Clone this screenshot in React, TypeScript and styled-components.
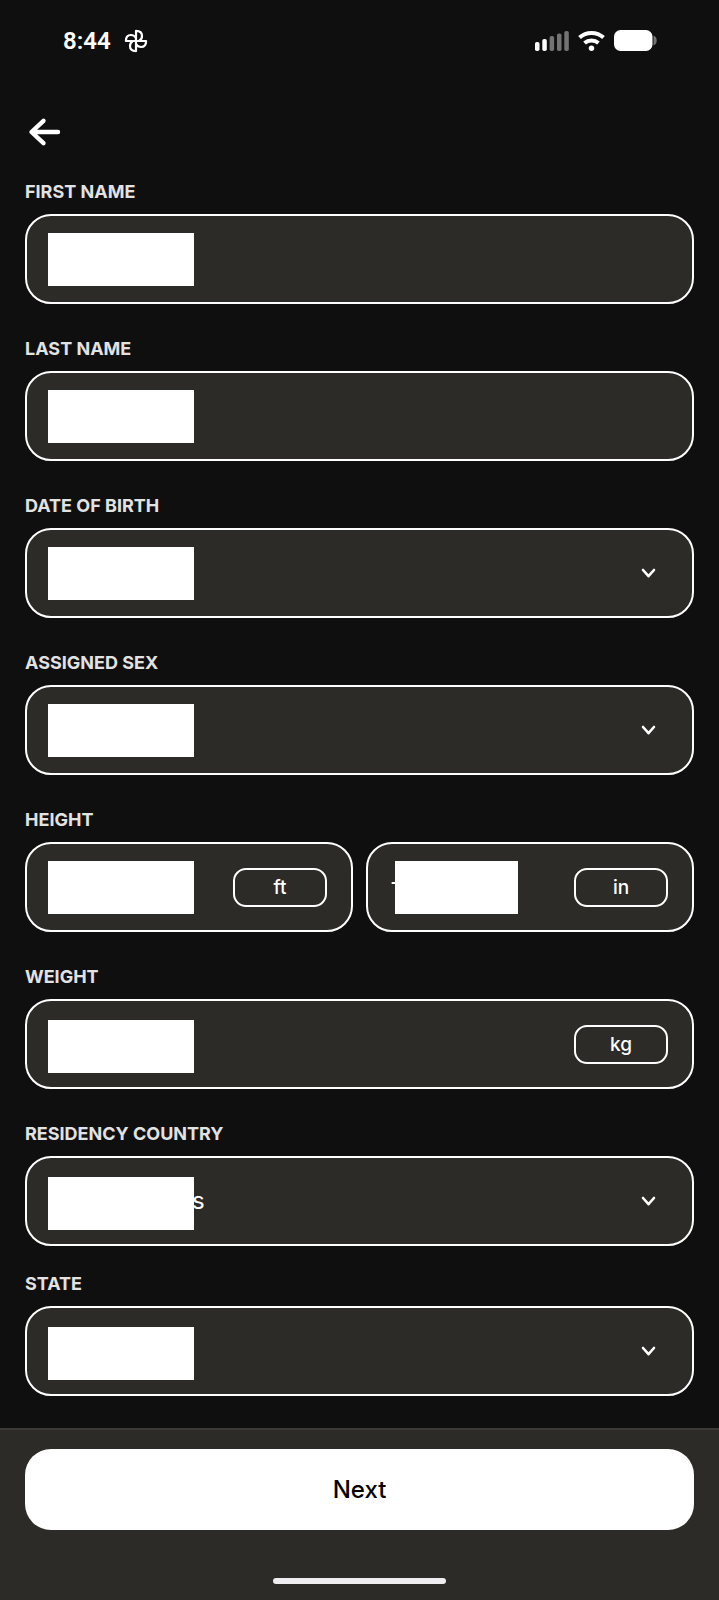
import React from "react";
import styled, { createGlobalStyle } from "styled-components";

const GlobalStyle = createGlobalStyle`
  *, *::before, *::after { box-sizing: border-box; }
  body {
    margin: 0;
    background: #0f0f0f;
    color: #fff;
    font-family: Inter, "Liberation Sans", sans-serif;
  }
`;

const Page = styled.div`
  min-height: 100vh;
  display: flex;
  flex-direction: column;
`;

const StatusBar = styled.div`
  height: 81px;
  padding: 0 62px 0 63px;
  display: flex;
  align-items: center;
  justify-content: space-between;
`;

const StatusGroup = styled.div<{ $gap: number }>`
  display: flex;
  align-items: center;
  gap: ${(p) => p.$gap}px;
`;

const Clock = styled.time`
  font: 600 24px/32px Roboto, sans-serif;
`;

const Header = styled.header`
  padding: 31px 25px 28px;
`;

const BackButton = styled.button`
  display: flex;
  align-items: center;
  width: 40px;
  height: 40px;
  padding: 0 0 0 3px;
  border: 0;
  background: none;
  color: #fff;
`;

const Form = styled.form`
  flex: 1;
  display: flex;
  flex-direction: column;
  gap: 33px;
  padding: 0 25px 32px;
`;

const FieldPair = styled.div`
  display: flex;
  flex-direction: column;
  gap: 26px;
`;

const Field = styled.div`
  display: flex;
  flex-direction: column;
  gap: 10px;
`;

const Label = styled.label`
  font-size: 18px;
  font-weight: 700;
  line-height: 24px;
  color: #e2e2e2;
`;

const BoxRow = styled.div`
  display: grid;
  grid-auto-flow: column;
  grid-auto-columns: minmax(0, 1fr);
  gap: 13px;
`;

const Box = styled.div`
  display: grid;
  align-items: center;
  height: 90px;
  border: 2px solid #fff;
  border-radius: 26px;
  background: #2d2b28;
  overflow: hidden;

  > * { grid-area: 1 / 1; }
`;

const controlStyle = `
  width: 100%;
  height: 100%;
  border: 0;
  outline: 0;
  background: none;
  color: #fff;
  font: 400 24px/32px Inter, "Liberation Sans", sans-serif;
`;

const TextInput = styled.input`
  ${controlStyle}
  padding: 0 120px 12px 22px;
`;

const Select = styled.select`
  ${controlStyle}
  appearance: none;
  padding: 0 60px 0 165px;
`;

const Mask = styled.span<{ $width?: number; $inset?: number; $low?: boolean }>`
  width: ${(p) => p.$width ?? 146}px;
  height: 53px;
  margin-left: ${(p) => p.$inset ?? 21}px;
  margin-top: ${(p) => (p.$low ? 4 : 0)}px;
  background: #fff;
  pointer-events: none;
`;

const UnitButton = styled.button`
  justify-self: end;
  width: 94px;
  height: 39px;
  margin-right: 24px;
  padding: 2px 0 0;
  border: 2px solid #fff;
  border-radius: 13px;
  background: none;
  color: #fff;
  font: 500 19px/24px Inter, "Liberation Sans", sans-serif;
`;

const Chevron = styled.svg`
  justify-self: end;
  margin-right: 36px;
  pointer-events: none;
`;

const Footer = styled.footer`
  display: flex;
  flex-direction: column;
  align-items: center;
  gap: 48px;
  padding: 19px 25px 16px;
  border-top: 2px solid #3d3937;
  background: #2d2b28;
`;

const NextButton = styled.button`
  width: 100%;
  height: 81px;
  border: 0;
  border-radius: 26px;
  background: #fff;
  color: #000;
  font: 500 24px/32px Inter, "Liberation Sans", sans-serif;
`;

const HomeIndicator = styled.div`
  width: 173px;
  height: 6px;
  border-radius: 3px;
  background: #efedef;
`;

const PinwheelIcon = () => (
  <svg width="24" height="24" viewBox="0 0 24 24" fill="none" stroke="#fff" strokeWidth="2.200" strokeLinejoin="round" aria-hidden="true">
    {[0, 90, 180, 270].map((angle) => (
      <path key={angle} transform={`rotate(${angle} 12 12)`} d="M12 12V1.900c3.800 0 6 2 6 5 0 2.200-1 4-3 5.100" />
    ))}
  </svg>
);

const SignalIcon = () => (
  <svg width="35" height="22" viewBox="0 0 35 22" aria-hidden="true">
    <rect x="0" y="12" width="4.500" height="9" rx="1.800" fill="#fff" />
    <rect x="7.300" y="9" width="4.500" height="12" rx="1.800" fill="#fff" />
    <rect x="14.600" y="6" width="4.500" height="15" rx="1.800" fill="#737373" />
    <rect x="22" y="3.500" width="4.500" height="17.500" rx="1.800" fill="#737373" />
    <rect x="29.300" y="1" width="4.500" height="20" rx="1.800" fill="#737373" />
  </svg>
);

const WifiIcon = () => (
  <svg width="28" height="22" viewBox="0 0 28 22" fill="none" stroke="#fff" strokeWidth="4" aria-hidden="true">
    <path d="M1.500 7.600C8.300 1.400 18.700 1.400 25.500 7.600" />
    <path d="M6.500 13C10.500 9.600 16.500 9.600 20.500 13" />
    <circle cx="13.500" cy="18.300" r="2.700" fill="#fff" stroke="none" />
  </svg>
);

const BatteryIcon = () => (
  <svg width="43" height="22" viewBox="0 0 43 22" aria-hidden="true">
    <rect x="0" y="0" width="38.500" height="21" rx="6.500" fill="#fff" />
    <path d="M39.500 5.500c2 .6 3.200 2.500 3.200 5s-1.200 4.400-3.200 5z" fill="#737373" />
  </svg>
);

const ArrowIcon = () => (
  <svg width="34" height="30" viewBox="0 0 34 30" fill="none" stroke="#fff" strokeWidth="4.400" strokeLinecap="round" strokeLinejoin="round" aria-hidden="true">
    <path d="M30 15H4M15.500 3.800L3.500 15l12 11.200" />
  </svg>
);

const ChevronIcon = () => (
  <Chevron width="16" height="12" viewBox="0 0 16 12" fill="none" stroke="#fff" strokeWidth="2.600" strokeLinecap="round" strokeLinejoin="round" aria-hidden="true">
    <path d="M3 3L8.500 9.200l5.500-6.200" />
  </Chevron>
);

type FieldProps = { id: string; label: string; value?: string; low?: boolean; unit?: string };

const TextField = ({ id, label, low, unit }: FieldProps) => (
  <Field>
    <Label htmlFor={id}>{label}</Label>
    <Box>
      <TextInput id={id} type="text" />
      <Mask $low={low} />
      {unit && <UnitButton type="button">{unit}</UnitButton>}
    </Box>
  </Field>
);

const SelectField = ({ id, label, value = "", low }: FieldProps) => (
  <Field>
    <Label htmlFor={id}>{label}</Label>
    <Box>
      <Select id={id} defaultValue={value}>
        <option value={value}>{value}</option>
      </Select>
      <Mask $low={low} />
      <ChevronIcon />
    </Box>
  </Field>
);

export default function App() {
  return (
    <Page>
      <GlobalStyle />
      <StatusBar>
        <StatusGroup $gap={13}>
          <Clock>8:44</Clock>
          <PinwheelIcon />
        </StatusGroup>
        <StatusGroup $gap={8}>
          <SignalIcon />
          <WifiIcon />
          <BatteryIcon />
        </StatusGroup>
      </StatusBar>
      <Header>
        <BackButton type="button" aria-label="Back">
          <ArrowIcon />
        </BackButton>
      </Header>
      <Form>
        <TextField id="first-name" label="FIRST NAME" />
        <TextField id="last-name" label="LAST NAME" />
        <SelectField id="birth-date" label="DATE OF BIRTH" />
        <SelectField id="sex" label="ASSIGNED SEX" />
        <Field>
          <Label htmlFor="height-ft">HEIGHT</Label>
          <BoxRow>
            <Box>
              <TextInput id="height-ft" type="text" />
              <Mask />
              <UnitButton type="button">ft</UnitButton>
            </Box>
            <Box>
              <TextInput type="text" aria-label="Height, inches" defaultValue="-" />
              <Mask $width={123} $inset={27} />
              <UnitButton type="button">in</UnitButton>
            </Box>
          </BoxRow>
        </Field>
        <TextField id="weight" label="WEIGHT" unit="kg" low />
        <FieldPair>
          <SelectField id="country" label="RESIDENCY COUNTRY" value="s" low />
          <SelectField id="state" label="STATE" low />
        </FieldPair>
      </Form>
      <Footer>
        <NextButton type="button">Next</NextButton>
        <HomeIndicator />
      </Footer>
    </Page>
  );
}
